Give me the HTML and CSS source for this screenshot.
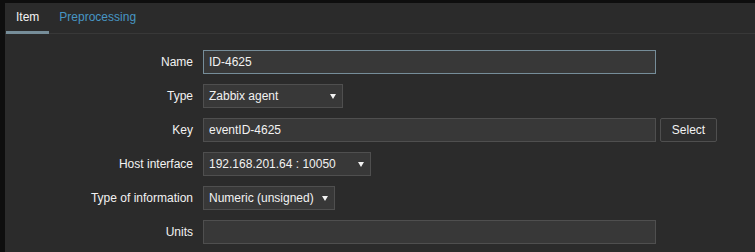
FILE: index.html
```html
<!DOCTYPE html>
<html lang="en">
<head>
    <meta charset="UTF-8">
    <title>Item</title>
    <link rel="stylesheet" href="styles.css">
</head>
<body>
    <div class="panel">
        <div class="tabs">
            <span class="tab active">Item</span>
            <span class="tab">Preprocessing</span>
        </div>
        <form class="form">
            <div class="row">
                <label class="label" for="name">Name</label>
                <input type="text" id="name" class="field wide focused" value="ID-4625">
            </div>
            <div class="row">
                <label class="label">Type</label>
                <div class="select type-select">Zabbix agent<span class="arrow"></span></div>
            </div>
            <div class="row">
                <label class="label" for="key">Key</label>
                <input type="text" id="key" class="field wide" value="eventID-4625">
                <button type="button" class="btn">Select</button>
            </div>
            <div class="row">
                <label class="label">Host interface</label>
                <div class="select host-select">192.168.201.64 : 10050<span class="arrow"></span></div>
            </div>
            <div class="row">
                <label class="label">Type of information</label>
                <div class="select info-select">Numeric (unsigned)<span class="arrow"></span></div>
            </div>
            <div class="row">
                <label class="label" for="units">Units</label>
                <input type="text" id="units" class="field wide" value="">
            </div>
        </form>
    </div>
</body>
</html>
```

FILE: styles.css
```css
body {
    margin: 0;
    background-color: #0e0e0e;
    font-family: Arial, "Liberation Sans", sans-serif;
    font-size: 12px;
    color: #f2f2f2;
}
.panel {
    margin: 3px 0 0 5px;
    background-color: #2b2b2b;
    height: 249px;
}
.tabs {
    display: flex;
    height: 30px;
    padding-left: 1px;
    border-bottom: 1px solid #383838;
}
.tab {
    padding: 0 10px;
    line-height: 28px;
    height: 28px;
    color: #4796c4;
}
.tab.active {
    color: #f2f2f2;
    border-bottom: 3px solid #768d99;
    margin-bottom: -1px;
}
.form {
    padding-top: 16px;
    display: flex;
    flex-direction: column;
    gap: 10px;
}
.row {
    display: flex;
    align-items: center;
    height: 24px;
}
.label {
    width: 188px;
    text-align: right;
    padding-right: 10px;
}
.field {
    box-sizing: border-box;
    height: 24px;
    padding: 0 5px;
    background-color: #383838;
    border: 1px solid #4f4f4f;
    color: #f2f2f2;
    font-family: inherit;
    font-size: 12px;
    outline: none;
}
.field.wide {
    width: 453px;
}
.field.focused {
    border-color: #768d99;
}
.select {
    position: relative;
    box-sizing: border-box;
    height: 24px;
    line-height: 22px;
    padding: 0 5px;
    background-color: #383838;
    border: 1px solid #4f4f4f;
}
.type-select {
    width: 140px;
}
.host-select {
    width: 168px;
}
.info-select {
    width: 132px;
}
.arrow {
    position: absolute;
    right: 6px;
    top: 9px;
    width: 0;
    height: 0;
    border-left: 3px solid transparent;
    border-right: 3px solid transparent;
    border-top: 5px solid #f2f2f2;
}
.btn {
    box-sizing: border-box;
    margin-left: 4px;
    width: 57px;
    height: 24px;
    background-color: #2f2f2f;
    border: 1px solid #4f4f4f;
    border-radius: 2px;
    color: #f2f2f2;
    font-family: inherit;
    font-size: 12px;
}
```
